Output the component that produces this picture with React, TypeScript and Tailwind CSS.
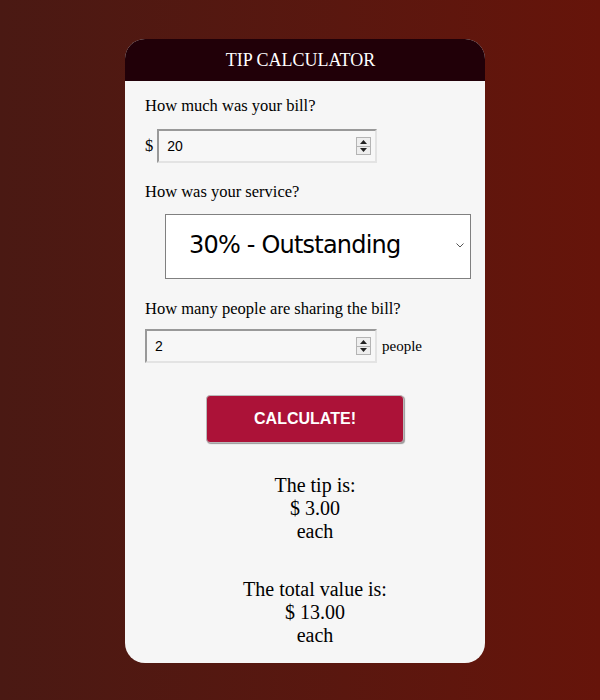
import { useState } from 'react';

// Small spinner box drawn like the classic number-input arrows
function Spinner() {
  return (
    <div className="flex flex-col w-[15px] h-[18px] border border-[#b4b4b4] bg-[#eeeeee] mr-[4px]">
      <div className="flex-1 flex items-center justify-center border-b border-[#b4b4b4]">
        <svg width="7" height="4" viewBox="0 0 7 4">
          <polygon points="3.5,0 7,4 0,4" fill="#222" />
        </svg>
      </div>
      <div className="flex-1 flex items-center justify-center">
        <svg width="7" height="4" viewBox="0 0 7 4">
          <polygon points="0,0 7,0 3.5,4" fill="#222" />
        </svg>
      </div>
    </div>
  );
}

function NumberBox({ value, onChange, width }: { value: string; onChange: (v: string) => void; width: string }) {
  return (
    <div
      className={`flex items-center h-[34px] ${width} border-2 border-t-[#999999] border-l-[#999999] border-b-[#e3e3e3] border-r-[#e3e3e3] bg-[#f7f7f7]`}
    >
      <input
        type="text"
        value={value}
        onChange={(e) => onChange(e.target.value)}
        className="flex-1 min-w-0 bg-transparent outline-none pl-[8px] text-[14px] text-black font-['Liberation_Sans',Arial,sans-serif]"
      />
      <Spinner />
    </div>
  );
}

export default function App() {
  const [bill, setBill] = useState('20');
  const [people, setPeople] = useState('2');

  return (
    <div className="min-h-[700px] bg-gradient-to-r from-[#4a1913] to-[#66140a] pt-[39px] font-['Liberation_Serif','Times_New_Roman',serif]">
      <div className="ml-[125px] w-[360px] h-[624px] rounded-[20px] overflow-hidden bg-[#f6f6f6]">
        <div className="h-[42px] bg-[#210008] flex items-center justify-center pr-[9px] text-white text-[18px]">
          TIP CALCULATOR
        </div>

        <div className="pl-[20px] pt-[16px] text-[16.5px] text-black">
          <p className="leading-[18px]">How much was your bill?</p>

          <div className="flex items-center mt-[14px]">
            <span className="mr-[4px]">$</span>
            <NumberBox value={bill} onChange={setBill} width="w-[220px]" />
          </div>

          <p className="leading-[18px] mt-[20px]">How was your service?</p>

          <div className="mt-[13px] ml-[20px] relative w-[306px] h-[65px] bg-white border border-[#808080] flex items-center">
            <span className="pl-[23px] pb-[3px] text-[24px] font-['DejaVu_Sans',Verdana,sans-serif] tracking-[-0.8px]">
              30% - Outstanding
            </span>
            <svg className="absolute right-[6px] top-[28px]" width="8" height="5" viewBox="0 0 8 5">
              <polyline points="0.5,0.5 4,4 7.5,0.5" fill="none" stroke="#555" strokeWidth="1" />
            </svg>
          </div>

          <p className="leading-[18px] mt-[21px]">How many people are sharing the bill?</p>

          <div className="flex items-center mt-[11px]">
            <NumberBox value={people} onChange={setPeople} width="w-[232px]" />
            <span className="ml-[5px] text-[15px]">people</span>
          </div>
        </div>

        <div className="flex justify-center mt-[32px]">
          <button className="w-[198px] h-[48px] bg-[#ac1238] text-white rounded-[4px] border border-[#b9b9b9] shadow-[1px_1px_1px_#9a9a9a] font-['Liberation_Sans',Arial,sans-serif] font-bold text-[16px]">
            CALCULATE!
          </button>
        </div>

        <div className="pl-[20px] mt-[31px] text-center text-[20px] leading-[23px] text-black">
          <p>The tip is:</p>
          <p>$ 3.00</p>
          <p>each</p>
          <p className="mt-[35px]">The total value is:</p>
          <p>$ 13.00</p>
          <p>each</p>
        </div>
      </div>
    </div>
  );
}
